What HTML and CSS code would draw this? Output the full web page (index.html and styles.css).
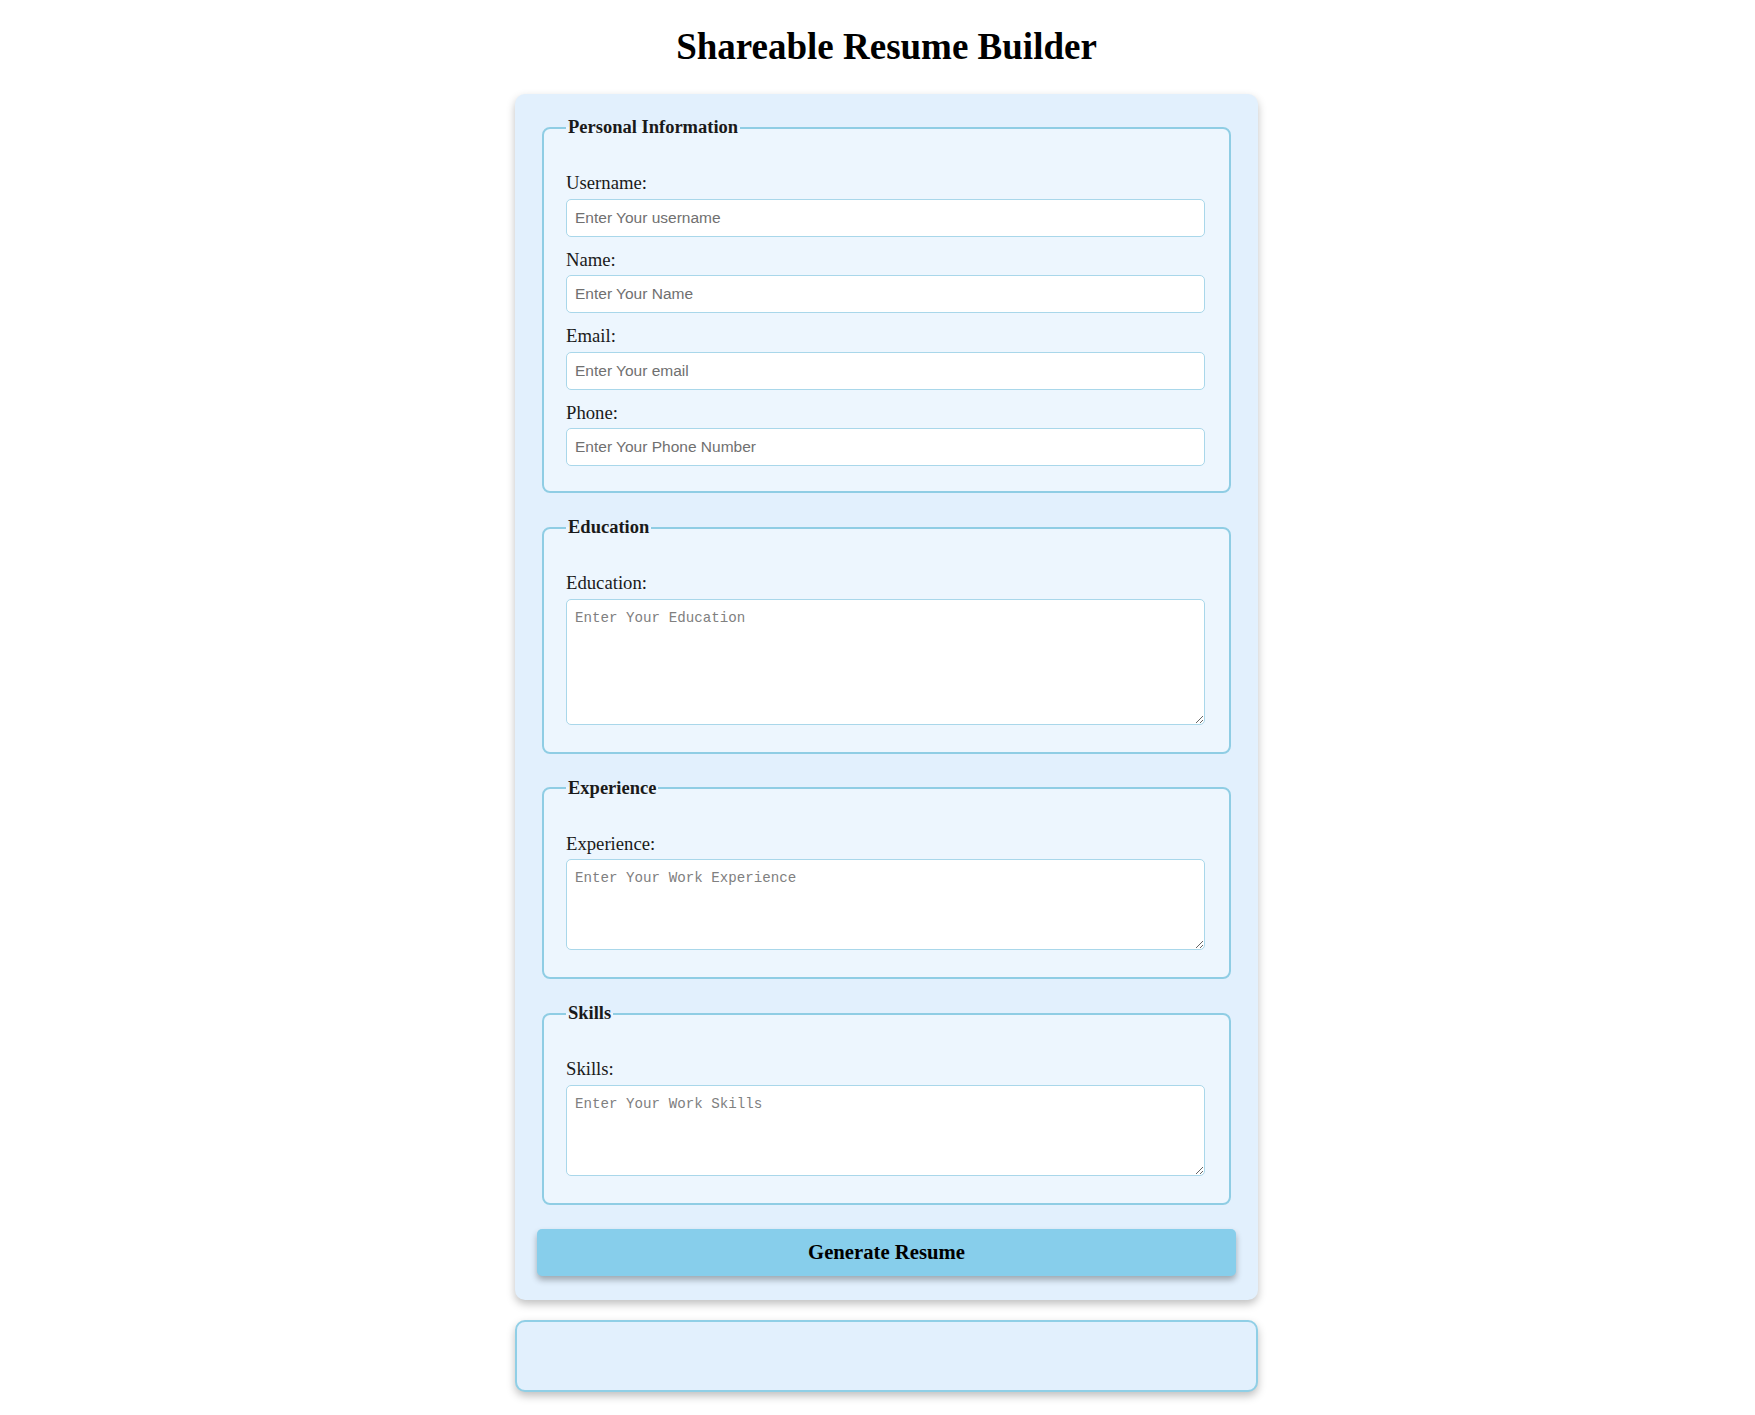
FILE: index.html
```html
<!DOCTYPE html>
<html lang="en">
<head>
<meta charset="utf-8">
<title>Shareable Resume Builder</title>
<link rel="stylesheet" href="styles.css">
</head>
<body>
<h1 class="title">Shareable Resume Builder</h1>
<form class="builder">
  <fieldset class="group">
    <legend class="group-title">Personal Information</legend>
    <label class="field-label" for="username">Username:</label>
    <input class="field-input" id="username" type="text" placeholder="Enter Your username">
    <label class="field-label" for="name">Name:</label>
    <input class="field-input" id="name" type="text" placeholder="Enter Your Name">
    <label class="field-label" for="email">Email:</label>
    <input class="field-input" id="email" type="email" placeholder="Enter Your email">
    <label class="field-label" for="phone">Phone:</label>
    <input class="field-input" id="phone" type="tel" placeholder="Enter Your Phone Number">
  </fieldset>
  <fieldset class="group">
    <legend class="group-title">Education</legend>
    <label class="field-label" for="education">Education:</label>
    <textarea class="field-area area-tall" id="education" placeholder="Enter Your Education"></textarea>
  </fieldset>
  <fieldset class="group">
    <legend class="group-title">Experience</legend>
    <label class="field-label" for="experience">Experience:</label>
    <textarea class="field-area area-short" id="experience" placeholder="Enter Your Work Experience"></textarea>
  </fieldset>
  <fieldset class="group">
    <legend class="group-title">Skills</legend>
    <label class="field-label" for="skills">Skills:</label>
    <textarea class="field-area area-short" id="skills" placeholder="Enter Your Work Skills"></textarea>
  </fieldset>
  <button class="generate" type="button">Generate Resume</button>
</form>
<div class="output"></div>
</body>
</html>
```

FILE: styles.css
```css
* {
  box-sizing: border-box;
}

body {
  margin: 0;
  padding: 0 0 40px 18px;
  background: #ffffff;
  font-family: "Liberation Serif", "Times New Roman", serif;
  color: #111;
}

.title {
  margin: 26px 0 26px;
  text-align: center;
  font-size: 37px;
  font-weight: bold;
  line-height: 42px;
  color: #000;
}

.builder {
  width: 743px;
  margin: 0 auto;
  padding: 23px 22px 24px;
  background: #e2f0fd;
  border-radius: 10px;
  box-shadow: 0 4px 8px rgba(0, 0, 0, 0.25);
}

.group {
  margin: 0 5px 24px;
  padding: 34px 24px 10px 22px;
  border: 2px solid #8fcde4;
  border-radius: 8px;
  background: #edf6fe;
}

.group-title {
  padding: 0 2px;
  font-size: 18.5px;
  font-weight: bold;
  line-height: 21px;
  color: #1a1a1a;
}

.field-label {
  display: block;
  margin-bottom: 5px;
  font-size: 18.7px;
  line-height: 21.5px;
  color: #1a1a1a;
}

.field-input {
  display: block;
  width: 100%;
  height: 38px;
  margin: 0 0 12px;
  padding: 0 8px;
  border: 1px solid #a9d7ea;
  border-radius: 5px;
  background: #fff;
  font-family: "Liberation Sans", Arial, sans-serif;
  font-size: 15.5px;
  color: #333;
}

.field-input:last-child {
  margin-bottom: 15px;
}

.field-input::placeholder {
  color: #707070;
}

.field-area {
  display: block;
  width: 100%;
  margin: 0 0 17px;
  padding: 10px 8px;
  border: 1px solid #a9d7ea;
  border-radius: 5px;
  background: #fff;
  font-family: "Liberation Mono", "Courier New", monospace;
  font-size: 14.2px;
  color: #333;
  resize: vertical;
}

.field-area::placeholder {
  color: #808080;
}

.area-tall {
  height: 126px;
}

.area-short {
  height: 91px;
}

.generate {
  display: block;
  width: 100%;
  height: 47px;
  margin: 0;
  border: none;
  border-radius: 5px;
  background: #87ceeb;
  box-shadow: 0 4px 6px rgba(0, 0, 0, 0.3);
  font-family: "Liberation Serif", "Times New Roman", serif;
  font-size: 20.7px;
  font-weight: bold;
  color: #000;
  cursor: pointer;
}

.output {
  width: 743px;
  height: 72px;
  margin: 20px auto 0;
  border: 2px solid #90cfe6;
  border-radius: 10px;
  background: #e2f0fd;
  box-shadow: 0 4px 8px rgba(0, 0, 0, 0.25);
}
```
